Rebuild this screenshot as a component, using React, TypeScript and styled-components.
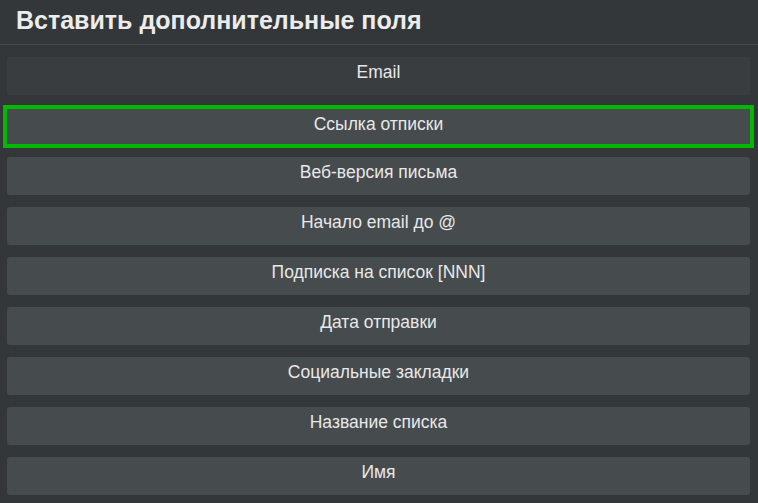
import React from "react";
import styled, { createGlobalStyle } from "styled-components";

const Global = createGlobalStyle`
  html, body { margin: 0; padding: 0; background: #33373a; }
  body { font-family: "Liberation Sans", Arial, sans-serif; }
`;

const Panel = styled.div`
  width: 758px;
  height: 503px;
  background: #33373a;
  display: flex;
  flex-direction: column;
  overflow: hidden;
`;

const Header = styled.div`
  height: 44px;
  border-bottom: 1px solid #45494c;
  display: flex;
  align-items: center;
  padding: 0 16px;
  box-sizing: content-box;
`;

const Title = styled.h1`
  margin: 0;
  font-size: 25px;
  font-weight: 700;
  color: #ececec;
  line-height: 1;
  padding-bottom: 3px;
`;

const List = styled.div`
  display: flex;
  flex-direction: column;
  gap: 12px;
  padding: 12px 8px 0 7px;
`;

const Item = styled.div<{ $variant?: "normal" | "dim" | "focused" }>`
  box-sizing: border-box;
  height: ${(p) => (p.$variant === "focused" ? "43px" : "38px")};
  margin: ${(p) => (p.$variant === "focused" ? "-2px -4px -3px -4px" : "0")};
  border: ${(p) => (p.$variant === "focused" ? "4px solid #02b802" : "none")};
  border-radius: ${(p) => (p.$variant === "focused" ? "0" : "3px")};
  background: ${(p) => (p.$variant === "dim" ? "#393d40" : "#464b4e")};
  color: #e8e8e8;
  font-size: 17.5px;
  display: flex;
  align-items: center;
  justify-content: center;
  padding-bottom: ${(p) => (p.$variant === "focused" ? "5px" : "7px")};
  cursor: pointer;
`;

const items: { label: string; variant?: "normal" | "dim" | "focused" }[] = [
  { label: "Email", variant: "dim" },
  { label: "Ссылка отписки", variant: "focused" },
  { label: "Веб-версия письма" },
  { label: "Начало email до @" },
  { label: "Подписка на список [NNN]" },
  { label: "Дата отправки" },
  { label: "Социальные закладки" },
  { label: "Название списка" },
  { label: "Имя" },
];

export default function App() {
  return (
    <>
      <Global />
      <Panel>
        <Header>
          <Title>Вставить дополнительные поля</Title>
        </Header>
        <List>
          {items.map((it) => (
            <Item key={it.label} $variant={it.variant ?? "normal"}>
              {it.label}
            </Item>
          ))}
        </List>
      </Panel>
    </>
  );
}
